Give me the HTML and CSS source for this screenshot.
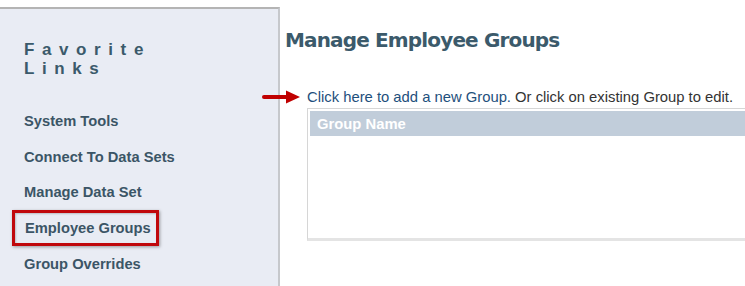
FILE: index.html
```html
<!DOCTYPE html>
<html lang="en">

<head>
    <meta charset="UTF-8">
    <title>Manage Employee Groups</title>
    <link rel="stylesheet" href="styles.css">
</head>

<body>
    <div class="page">
        <div class="sidebar">
            <h2 class="fav-title">Favorite<br>Links</h2>
            <ul class="fav-links">
                <li><a href="#">System Tools</a></li>
                <li><a href="#">Connect To Data Sets</a></li>
                <li><a href="#">Manage Data Set</a></li>
                <li class="marked"><a href="#">Employee Groups</a></li>
                <li><a href="#">Group Overrides</a></li>
            </ul>
        </div>

        <div class="content">
            <h1>Manage Employee Groups</h1>
            <p class="hint">
                <span class="arrow">
                    <svg width="40" height="14" viewBox="0 0 40 14">
                        <path d="M2 7 H26" stroke="#c00000" stroke-width="4" stroke-linecap="round" />
                        <path d="M24 0.5 L38 7 L24 13.5 Z" fill="#c00000" />
                    </svg>
                </span>
                <a href="#">Click here to add a new Group.</a> Or click on existing Group to edit.
            </p>
            <div class="grid">
                <div class="grid-head">Group Name</div>
                <div class="grid-body"></div>
            </div>
        </div>
    </div>
</body>

</html>
```

FILE: styles.css
```css
* {
    margin: 0;
    padding: 0;
    box-sizing: border-box;
}

body {
    background: #fff;
    font-family: 'Liberation Sans', Arial, sans-serif;
    overflow: hidden;
}

.page {
    display: flex;
    padding-top: 7px;
    height: 100vh;
}

.sidebar {
    width: 280px;
    flex-shrink: 0;
    background: #e9ecf4;
    border-top: 2px solid #b4b4b4;
    border-right: 2px solid #c6c8cc;
    padding: 31px 0 0 24px;
}

.fav-title {
    font-size: 17px;
    font-weight: bold;
    letter-spacing: 7.6px;
    line-height: 19px;
    color: #3b5a6b;
}

.fav-links {
    list-style: none;
    margin-top: 25px;
}

.fav-links li {
    height: 35.7px;
    display: flex;
    align-items: center;
}

.fav-links a {
    font-size: 14.7px;
    font-weight: bold;
    color: #3b5566;
    text-decoration: none;
}

.fav-links .marked {
    margin-left: -12px;
    width: 147px;
    padding-left: 10px;
    border: 3px solid #c0080c;
    box-shadow: 1px 1px 3px rgba(0, 0, 0, 0.35), inset 1px 1px 2px rgba(0, 0, 0, 0.2);
}

.content {
    flex: 1;
    padding: 21px 0 0 5px;
}

.content h1 {
    font-family: 'DejaVu Sans', Verdana, sans-serif;
    font-size: 20px;
    font-weight: bold;
    color: #3b5a6b;
    letter-spacing: -0.85px;
}

.hint {
    position: relative;
    margin-top: 37px;
    padding-left: 22px;
    font-size: 14.8px;
    color: #333;
}

.hint a {
    color: #1e4f7c;
    text-decoration: none;
}

.arrow {
    position: absolute;
    left: -23px;
    top: 1px;
    line-height: 0;
}

.grid {
    margin: 3px 0 0 22px;
    border: 1px solid #d6d6d6;
    border-bottom: 3px solid #e4e4e4;
    border-right: none;
    padding: 2px 0 0 2px;
    height: 133px;
}

.grid-head {
    background: #c1cdda;
    color: #fff;
    font-size: 14.8px;
    font-weight: bold;
    padding: 5px 7px;
    height: 25px;
}
```
